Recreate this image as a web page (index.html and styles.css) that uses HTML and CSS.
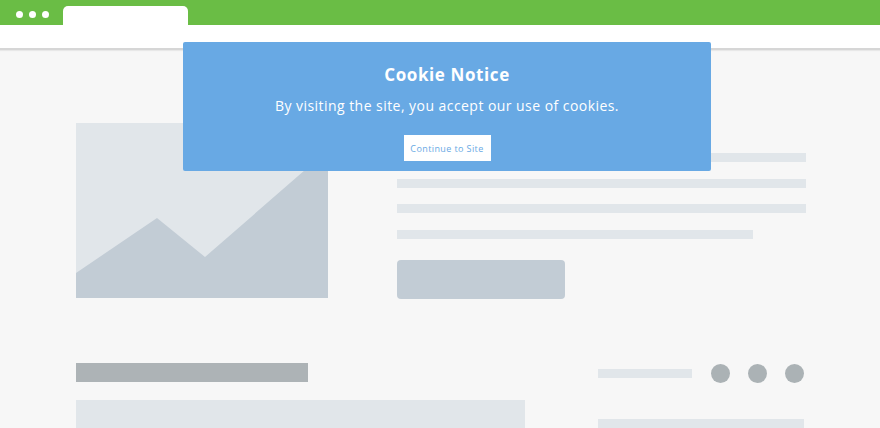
FILE: index.html
```html
<!DOCTYPE html>
<html>
<head>
    <title>Cookie Notice</title>
    <link rel="stylesheet" href="styles.css">
</head>
<body>
    <div class="browser-bar">
        <div class="dots">
            <span class="dot"></span>
            <span class="dot"></span>
            <span class="dot"></span>
        </div>
        <div class="tab"></div>
    </div>
    <div class="address-bar"></div>

    <div class="page">
        <div class="hero">
            <div class="picture">
                <svg viewBox="0 0 252 175" width="252" height="175" preserveAspectRatio="none">
                    <rect width="252" height="175" fill="#e1e6ea"/>
                    <polygon points="0,150 81,95 129,134 252,27 252,175 0,175" fill="#c2ccd5"/>
                </svg>
            </div>
            <div class="text-lines">
                <div class="line"></div>
                <div class="line"></div>
                <div class="line"></div>
                <div class="line short"></div>
                <div class="fake-button"></div>
            </div>
        </div>

        <div class="lower">
            <div class="lower-left">
                <div class="heading-bar"></div>
                <div class="block"></div>
            </div>
            <div class="lower-right">
                <div class="share-row">
                    <div class="line small"></div>
                    <div class="circles">
                        <span class="circle"></span>
                        <span class="circle"></span>
                        <span class="circle"></span>
                    </div>
                </div>
                <div class="line wide"></div>
            </div>
        </div>
    </div>

    <div class="cookie-notice">
        <h1>Cookie Notice</h1>
        <p>By visiting the site, you accept our use of cookies.</p>
        <button>Continue to Site</button>
    </div>
</body>
</html>
```

FILE: styles.css
```css
body {
  margin: 0;
  background: #f7f7f7;
  font-family: 'Open Sans', sans-serif;
  height: 428px;
  overflow: hidden;
}

.browser-bar {
  height: 25px;
  background: #6abd45;
  display: flex;
  align-items: flex-end;
  padding-left: 16px;
}

.dots {
  display: flex;
  gap: 6px;
  align-self: center;
  margin-top: 3px;
}

.dot {
  width: 7px;
  height: 7px;
  border-radius: 50%;
  background: #fff;
}

.tab {
  width: 125px;
  height: 19px;
  margin-left: 14px;
  background: #fff;
  border-radius: 5px 5px 0 0;
}

.address-bar {
  height: 23px;
  background: #fff;
  border-bottom: 2px solid #d6d6d6;
  box-shadow: 0 1px 1px rgba(0, 0, 0, 0.06);
}

.page {
  padding: 73px 0 0 76px;
}

.hero {
  display: grid;
  grid-template-columns: 252px 409px;
  column-gap: 69px;
  height: 175px;
}

.picture svg {
  display: block;
}

.text-lines {
  padding-top: 30px;
  display: flex;
  flex-direction: column;
}

.line {
  height: 9px;
  background: #e1e6ea;
  margin-bottom: 16.6px;
}

.line.short {
  width: 356px;
  margin-bottom: 21px;
}

.fake-button {
  width: 168px;
  height: 39px;
  background: #c2ccd5;
  border-radius: 4px;
}

.lower {
  display: grid;
  grid-template-columns: 449px 208px;
  column-gap: 73px;
  margin-top: 65px;
}

.heading-bar {
  width: 232px;
  height: 19px;
  background: #adb3b6;
}

.block {
  margin-top: 18px;
  height: 28px;
  background: #e1e6ea;
}

.share-row {
  display: flex;
  align-items: center;
  height: 19px;
  margin-top: 1px;
}

.line.small {
  width: 94px;
  margin: 0;
}

.circles {
  display: flex;
  gap: 18px;
  margin-left: 19px;
}

.circle {
  width: 19px;
  height: 19px;
  border-radius: 50%;
  background: #abb2b5;
}

.line.wide {
  width: 206px;
  height: 9px;
  margin-top: 36px;
}

.cookie-notice {
  position: absolute;
  left: 183px;
  top: 42px;
  width: 528px;
  height: 129px;
  box-sizing: border-box;
  padding-top: 22px;
  background: #68a9e4;
  border-radius: 2px;
  display: flex;
  flex-direction: column;
  align-items: center;
  color: #fff;
}

.cookie-notice h1 {
  margin: 0;
  font-size: 17px;
  line-height: 22px;
  font-weight: 700;
  letter-spacing: 0.6px;
}

.cookie-notice p {
  margin: 10px 0 0;
  font-size: 14px;
  line-height: 20px;
  letter-spacing: 0.45px;
}

.cookie-notice button {
  margin-top: 19px;
  height: 26px;
  width: 87px;
  padding: 0;
  border: 0;
  background: #fff;
  color: #68a9e4;
  font-family: 'Open Sans', sans-serif;
  font-size: 9px;
  letter-spacing: 0.4px;
}
```
